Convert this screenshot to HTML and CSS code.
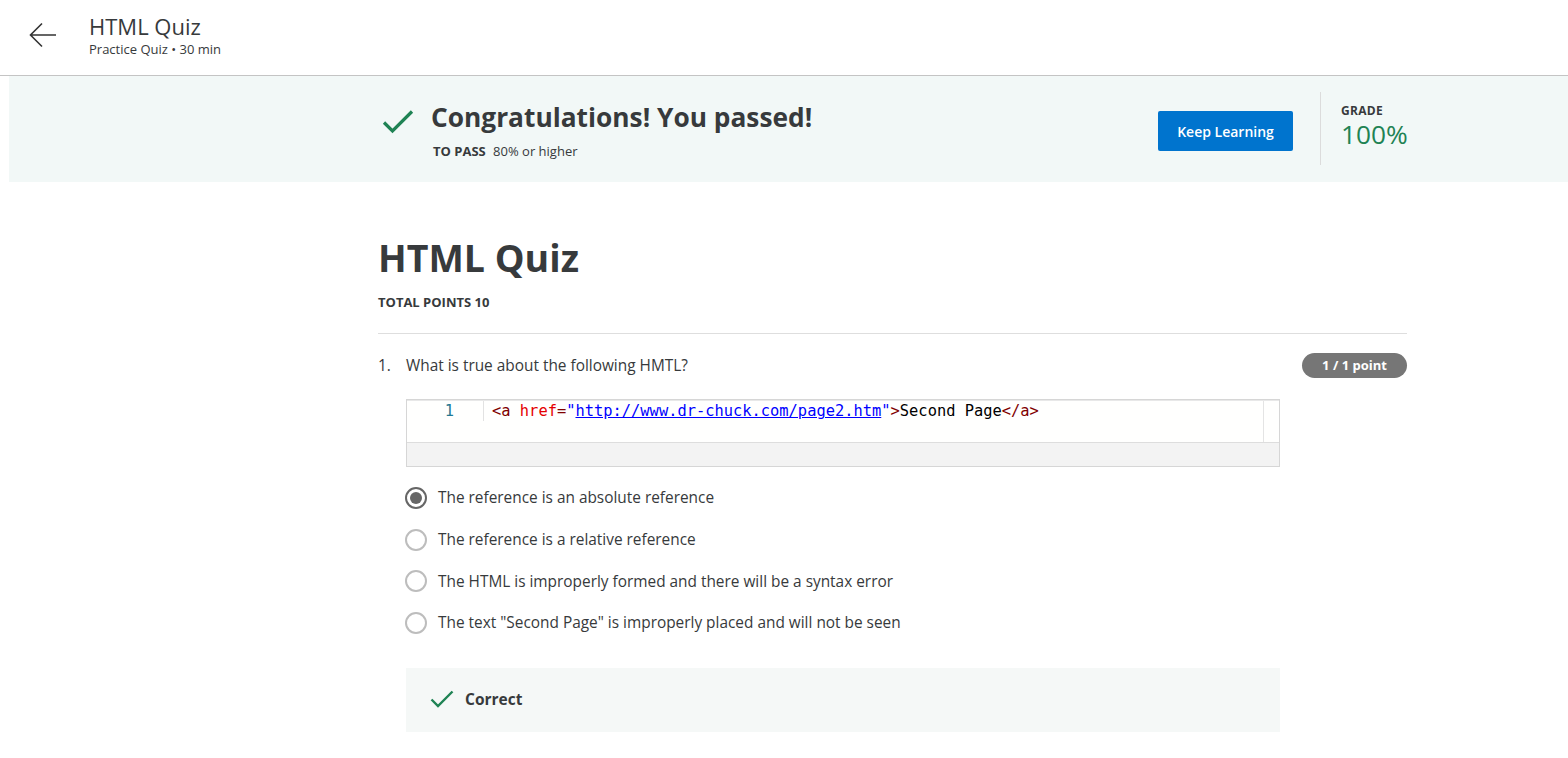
FILE: index.html
```html
<!DOCTYPE html>
<html>
<head>
<meta charset="utf-8">
<link rel="stylesheet" href="styles.css">
</head>
<body>
<header class="topbar">
  <button class="back" aria-label="Back">
    <svg width="28" height="26" viewBox="0 0 28 26"><path d="M27 13H2M13 1.5L1.5 13L13 24.5" fill="none" stroke="#333" stroke-width="1.6"/></svg>
  </button>
  <div class="top-titles">
    <div class="top-title">HTML Quiz</div>
    <div class="top-sub">Practice Quiz • 30 min</div>
  </div>
</header>
<section class="banner">
  <div class="banner-inner">
    <svg class="bcheck" width="32" height="26" viewBox="0 0 32 26"><path d="M2 13.5L10.5 22L30 2.5" fill="none" stroke="#1f8354" stroke-width="3.2"/></svg>
    <div class="banner-text">
      <div class="congrats">Congratulations! You passed!</div>
      <div class="topass"><b>TO PASS</b> 80% or higher</div>
    </div>
    <button class="keep">Keep Learning</button>
    <div class="grade">
      <div class="grade-label">GRADE</div>
      <div class="grade-value">100%</div>
    </div>
  </div>
</section>
<main class="content">
  <h1 class="quiz-title">HTML Quiz</h1>
  <div class="total">TOTAL POINTS 10</div>
  <hr class="sep">
  <div class="question">
    <div class="qhead">
      <span class="qnum">1.</span>
      <span class="qtext">What is true about the following HMTL?</span>
      <span class="badge">1 / 1 point</span>
    </div>
    <div class="code">
      <div class="code-main">
        <div class="gutter">1</div>
        <div class="line"><span class="p">&lt;</span><span class="tag">a</span> <span class="attr">href</span><span class="p">=</span><span class="q">"</span><a class="url">http://www.dr-chuck.com/page2.htm</a><span class="q">"</span><span class="p">&gt;</span>Second Page<span class="p">&lt;/</span><span class="tag">a</span><span class="p">&gt;</span></div>
        <div class="vscroll"></div>
      </div>
      <div class="code-foot"></div>
    </div>
    <ul class="options">
      <li class="opt"><span class="radio checked"></span>The reference is an absolute reference</li>
      <li class="opt"><span class="radio"></span>The reference is a relative reference</li>
      <li class="opt"><span class="radio"></span>The HTML is improperly formed and there will be a syntax error</li>
      <li class="opt"><span class="radio"></span>The text "Second Page" is improperly placed and will not be seen</li>
    </ul>
    <div class="feedback">
      <svg width="24" height="18" viewBox="0 0 24 18"><path d="M1.5 9.5L8 16L22.5 1.5" fill="none" stroke="#1f8354" stroke-width="2.4"/></svg>
      <span>Correct</span>
    </div>
  </div>
</main>
</body>
</html>
```
FILE: styles.css
```css
* { box-sizing: border-box; }
html, body { margin: 0; padding: 0; background: #fff; }
body {
  font-family: "Open Sans", "Liberation Sans", sans-serif;
  color: #373a3c;
}
.topbar {
  height: 76px;
  border-bottom: 1px solid #c4c4c4;
  display: flex;
  align-items: flex-start;
}
.back {
  margin: 22px 0 0 29px;
  padding: 0;
  border: 0;
  background: none;
  width: 28px;
  height: 26px;
}
.top-titles { margin-left: 32px; padding-top: 12px; }
.top-title { font-size: 22px; line-height: 28px; color: #373a3c; }
.top-sub { font-size: 13px; line-height: 18px; color: #373a3c; }

.banner {
  margin-left: 9px;
  background: #f2f8f7;
  height: 106px;
}
.banner-inner {
  width: 1029px;
  margin-left: 369px;
  display: flex;
  align-items: flex-start;
  height: 100%;
}
.bcheck { margin: 33px 0 0 4px; }
.banner-text { margin-left: 17px; padding-top: 23px; flex: 1; }
.congrats { font-size: 26.3px; font-weight: 700; line-height: 36px; color: #373a3c; }
.topass { font-size: 13px; margin-top: 7px; margin-left: 2px; line-height: 18px; }
.topass b { font-weight: 700; margin-right: 4px; }
.keep {
  margin-top: 35px;
  margin-right: 1px;
  width: 135px;
  height: 40px;
  background: #0074ce;
  color: #fff;
  border: 0;
  border-radius: 2px;
  font-family: "Open Sans", sans-serif;
  font-size: 14px;
  font-weight: 600;
}
.grade {
  margin-top: 16px;
  margin-left: 26px;
  height: 73px;
  border-left: 1px solid #dcdcdc;
  padding-left: 20px;
  padding-top: 11px;
  width: 87px;
  flex: none;
}
.grade-label { font-size: 12px; font-weight: 700; line-height: 16px; letter-spacing: 0.3px; }
.grade-value { font-size: 26.3px; color: #1f8354; line-height: 30px; }

.content {
  width: 1029px;
  margin-left: 378px;
  padding-top: 50px;
}
.quiz-title { margin: 0; font-size: 37.5px; font-weight: 700; line-height: 52px; color: #373a3c; }
.total { font-size: 13px; font-weight: 700; margin-top: 9px; line-height: 18px; }
.sep { border: 0; border-top: 1px solid #dedede; margin: 22px 0 0; }
.qhead { display: flex; align-items: center; margin-top: 18px; height: 26px; }
.qnum { font-size: 15.4px; width: 28px; }
.qtext { font-size: 15.4px; flex: 1; }
.badge {
  background: #767676;
  color: #fff;
  font-size: 13px;
  font-weight: 700;
  border-radius: 13px;
  width: 105px;
  height: 25px;
  line-height: 25px;
  text-align: center;
}
.code {
  margin: 21px 0 0 28px;
  width: 874px;
  border: 1px solid #d6d6d6;
  background: #f3f3f3;
}
.code-main {
  background: #fffffe;
  height: 43px;
  display: flex;
  border-bottom: 1px solid #dddddd;
  border-top: 1px solid #e8e8e8;
}
.gutter {
  width: 77px;
  text-align: right;
  padding-right: 29px;
  font-family: "DejaVu Sans Mono", monospace;
  font-size: 15.4px;
  color: #237893;
  line-height: 20px;
  height: 20px;
  border-right: 1px solid #e2e2e2;
}
.line {
  flex: 1;
  padding-left: 8px;
  font-family: "DejaVu Sans Mono", monospace;
  font-size: 15.4px;
  line-height: 20px;
  color: #000;
  white-space: pre;
}
.tag { color: #800000; }
.attr { color: #e50000; }
.p { color: #800000; }
.q { color: #0000ff; }
.url { color: #0000ff; text-decoration: underline; }
.vscroll { width: 16px; border-left: 1px solid #e4e4e4; }
.code-foot { height: 23px; }
.options { list-style: none; margin: 10px 0 0 27px; padding: 0; }
.opt {
  display: flex;
  align-items: center;
  font-size: 15.4px;
  height: 41.7px;
}
.radio {
  width: 22px;
  height: 22px;
  border-radius: 50%;
  border: 2px solid #bdbdbd;
  margin-right: 11px;
  position: relative;
  flex: none;
}
.radio.checked { border-color: #666; }
.radio.checked::after {
  content: "";
  position: absolute;
  left: 3px; top: 3px;
  width: 12px; height: 12px;
  border-radius: 50%;
  background: #666;
}
.feedback {
  margin: 24px 0 0 28px;
  width: 874px;
  height: 64px;
  background: #f5f8f7;
  display: flex;
  align-items: center;
  padding-left: 24px;
  padding-bottom: 2px;
  font-size: 15.5px;
  font-weight: 700;
}
.feedback svg { margin-right: 11px; }
```
